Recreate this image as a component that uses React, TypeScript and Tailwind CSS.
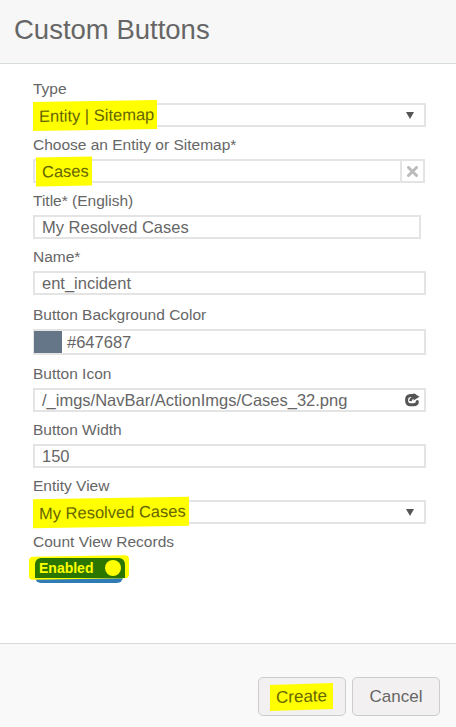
import React from 'react';

const font = { fontFamily: '"Liberation Sans", Arial, sans-serif' };

function Hl({ children, className = '' }: { children: React.ReactNode; className?: string }) {
  return (
    <span className={`bg-[#ffff00] text-[#666600] -ml-[6px] pl-[6px] pr-[3px] py-[2px] -skew-y-1 inline-block ${className}`}>
      {children}
    </span>
  );
}

function Label({ children }: { children: React.ReactNode }) {
  return <div className="text-[15.5px] leading-[20px] text-[#666] mb-[4px]">{children}</div>;
}

function Caret() {
  return (
    <svg width="8" height="7" viewBox="0 0 8 7" className="shrink-0">
      <path d="M0 0 H8 L4 7 Z" fill="#555" />
    </svg>
  );
}

function Box({ children, className = '' }: { children: React.ReactNode; className?: string }) {
  return (
    <div className={`h-[24px] border-2 border-[#e4e4e4] bg-white flex items-center text-[16.5px] text-[#666] ${className}`}>
      {children}
    </div>
  );
}

export default function App() {
  return (
    <div className="w-[456px] h-[727px] flex flex-col bg-white" style={font}>
      <div className="h-[64px] bg-[#f7f7f7] border-b border-[#d6dcdc] pl-[14px] pt-[15px]">
        <h1 className="text-[27.5px] leading-[30px] text-[#666]">Custom Buttons</h1>
      </div>

      <div className="flex-1 pl-[33px] pr-[30px] pt-[15px] flex flex-col gap-[8px]">
        <div>
          <Label>Type</Label>
          <Box className="justify-between pl-[4px] pr-[10px]">
            <Hl>Entity | Sitemap</Hl>
            <Caret />
          </Box>
        </div>

        <div>
          <Label>Choose an Entity or Sitemap*</Label>
          <Box className="mr-[1px]">
            <div className="flex-1 pl-[7px]">
              <Hl>Cases</Hl>
            </div>
            <div className="w-[23px] h-full border-l-2 border-[#e4e4e4] flex items-center justify-center">
              <svg width="11" height="11" viewBox="0 0 11 11">
                <path d="M1.5 1.5 L9.5 9.5 M9.5 1.5 L1.5 9.5" stroke="#bbb" strokeWidth="3" strokeLinecap="round" />
              </svg>
            </div>
          </Box>
        </div>

        <div>
          <Label>Title* (English)</Label>
          <Box className="pl-[7px] mr-[5px]">My Resolved Cases</Box>
        </div>

        <div>
          <Label>Name*</Label>
          <Box className="pl-[7px]">ent_incident</Box>
        </div>

        <div className="mt-[2px]">
          <Label>Button Background Color</Label>
          <Box className="h-[26px]">
            <div className="w-[28px] h-full bg-[#647687] -ml-[1px]" />
            <span className="pl-[5px]">#647687</span>
          </Box>
        </div>

        <div className="mt-[1px]">
          <Label>Button Icon</Label>
          <Box className="pl-[7px] pr-[4px] justify-between">
            <span>/_imgs/NavBar/ActionImgs/Cases_32.png</span>
            <svg width="15" height="14" viewBox="0 0 14 13">
              <path d="M9 2.2 H5 Q1.5 2.2 1.5 6 V7 Q1.5 11 5 11 H8 Q11.5 11 11.5 8" fill="none" stroke="#555" strokeWidth="2.8" strokeLinecap="round" />
              <path d="M8 0 L13.5 3.5 L8 7 Z" fill="#555" />
              <path d="M5 7.5 Q5.5 4.2 9 3.6" fill="none" stroke="#555" strokeWidth="2.4" />
            </svg>
          </Box>
        </div>

        <div>
          <Label>Button Width</Label>
          <Box className="pl-[7px]">150</Box>
        </div>

        <div>
          <Label>Entity View</Label>
          <Box className="justify-between pl-[4px] pr-[10px]">
            <Hl>My Resolved Cases</Hl>
            <Caret />
          </Box>
        </div>

        <div>
          <Label>Count View Records</Label>
          <div className="relative w-[100px] h-[27px] -ml-[4px]">
            <div className="absolute left-[6px] top-[2px] w-[88px] h-[25px] rounded-[6px] bg-[#2f7bb5]" />
            <div className="absolute left-0 top-0 w-[100px] h-[23px] rounded-[4px] bg-[#ffff00] -skew-y-1" />
            <div className="absolute left-[6px] top-[2px] w-[90px] h-[20px] rounded-t-[6px] bg-[#2a7600] flex items-center pl-[4px] pr-[4px] justify-between">
              <span className="text-[14px] font-bold text-[#ffff00] leading-none">Enabled</span>
              <span className="w-[16px] h-[16px] rounded-full bg-[#ffff00]" />
            </div>
          </div>
        </div>
      </div>

      <div className="h-[84px] bg-[#f9f9f9] border-t border-[#d6dcdc] flex justify-end items-start gap-[6px] pt-[33px] pr-[16px]">
        <button className="w-[88px] h-[39px] rounded-[5px] border border-[#ccc] bg-[#f2f0f0] text-[17px] text-[#666] flex items-center justify-center">
          <span className="bg-[#ffff00] text-[#666600] px-[6px] -skew-y-2 inline-block">Create</span>
        </button>
        <button className="w-[88px] h-[39px] rounded-[5px] border border-[#ccc] bg-[#f2f0f0] text-[17px] text-[#666]">
          Cancel
        </button>
      </div>
    </div>
  );
}
